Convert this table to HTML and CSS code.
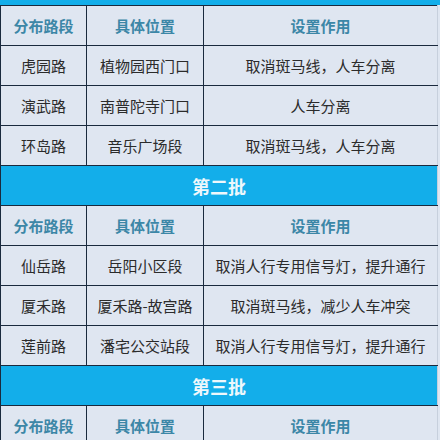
FILE: index.html
```html
<!DOCTYPE html>
<html lang="zh-CN">
<head>
<meta charset="utf-8">
<link rel="stylesheet" href="styles.css">
</head>
<body>
<div class="strip"></div>
<table class="tbl">
  <colgroup><col class="c1"><col class="c2"><col class="c3"></colgroup>
  <tbody>
    <tr class="head"><td>分布路段</td><td>具体位置</td><td>设置作用</td></tr>
    <tr><td>虎园路</td><td>植物园西门口</td><td>取消斑马线，人车分离</td></tr>
    <tr><td>演武路</td><td>南普陀寺门口</td><td>人车分离</td></tr>
    <tr><td>环岛路</td><td>音乐广场段</td><td>取消斑马线，人车分离</td></tr>
    <tr class="band"><td colspan="3">第二批</td></tr>
    <tr class="head"><td>分布路段</td><td>具体位置</td><td>设置作用</td></tr>
    <tr><td>仙岳路</td><td>岳阳小区段</td><td>取消人行专用信号灯，提升通行</td></tr>
    <tr><td>厦禾路</td><td>厦禾路-故宫路</td><td>取消斑马线，减少人车冲突</td></tr>
    <tr><td>莲前路</td><td>潘宅公交站段</td><td>取消人行专用信号灯，提升通行</td></tr>
    <tr class="band"><td colspan="3">第三批</td></tr>
    <tr class="head"><td>分布路段</td><td>具体位置</td><td>设置作用</td></tr>
  </tbody>
</table>
</body>
</html>
```
FILE: styles.css
```css
html, body {
  margin: 0;
  padding: 0;
  background: #dfe6f1;
  overflow: hidden;
}
body {
  width: 440px;
  height: 440px;
  font-family: "Noto Sans CJK SC", "Noto Sans", sans-serif;
  color: #2b2b2b;
}
.strip {
  height: 5px;
  background: #13aeea;
}
.tbl {
  width: 437px;
  border-collapse: collapse;
  table-layout: fixed;
  font-size: 15px;
}
.c1 { width: 86px; }
.c2 { width: 117px; }
.c3 { width: 234px; }
.tbl td {
  height: 39px;
  padding: 0;
  text-align: center;
  vertical-align: middle;
  border: 1px solid #1a2a3e;
  background: #dfe6f1;
  line-height: 20px;
  white-space: nowrap;
}
.tbl td:last-child {
  border-right-color: #c7d0dd;
}
.head td {
  color: #3c87a7;
  font-weight: bold;
}
.band td {
  background: #13aeea;
  color: #eef8fc;
  font-weight: bold;
  font-size: 18px;
}
```
